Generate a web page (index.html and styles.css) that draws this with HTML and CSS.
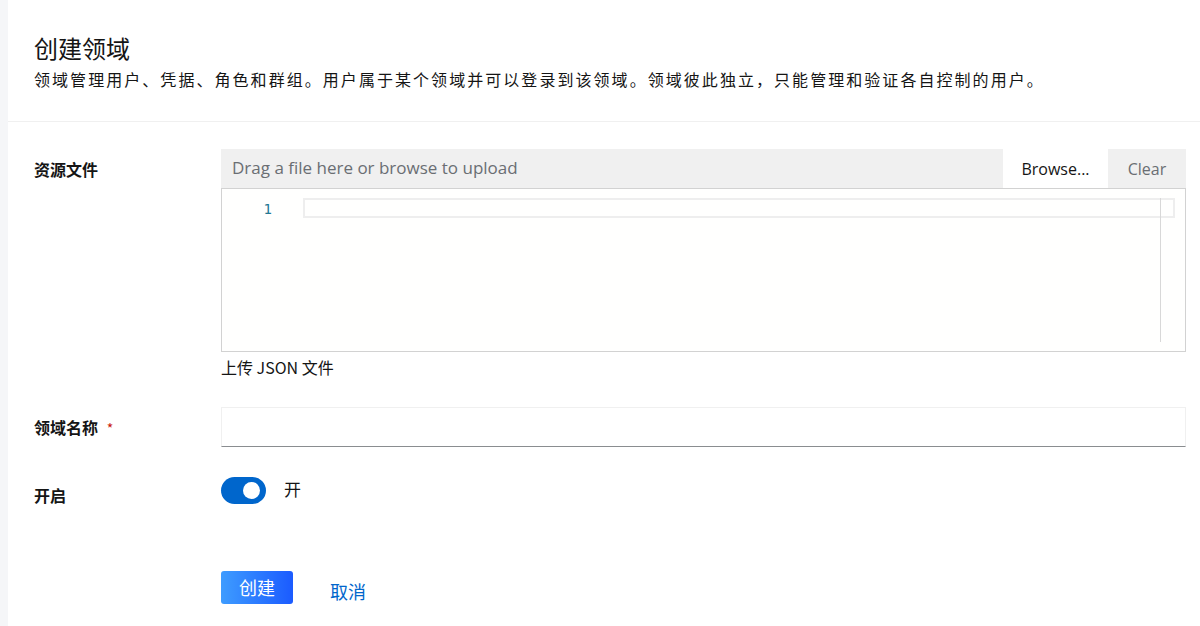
FILE: index.html
```html
<!DOCTYPE html>
<html lang="zh-CN">
<head>
    <meta charset="UTF-8">
    <meta name="viewport" content="width=device-width, initial-scale=1.0">
    <title>创建领域</title>
    <link rel="stylesheet" href="styles.css">
</head>
<body>
    <div class="page">
        <section class="page-header">
            <h1 class="page-title">创建领域</h1>
            <p class="page-desc">领域管理用户、凭据、角色和群组。用户属于某个领域并可以登录到该领域。领域彼此独立，只能管理和验证各自控制的用户。</p>
        </section>

        <form class="realm-form">
            <div class="form-row">
                <label class="form-label">资源文件</label>
                <div class="form-field">
                    <div class="file-bar">
                        <span class="file-hint">Drag a file here or browse to upload</span>
                        <button type="button" class="file-btn browse-btn">Browse...</button>
                        <button type="button" class="file-btn clear-btn">Clear</button>
                    </div>
                    <div class="editor">
                        <div class="editor-gutter">1</div>
                        <div class="editor-lines">
                            <div class="current-line"></div>
                        </div>
                        <div class="editor-ruler"></div>
                    </div>
                    <div class="helper-text">上传 JSON 文件</div>
                </div>
            </div>

            <div class="form-row name-row">
                <label class="form-label">领域名称 <span class="required">*</span></label>
                <div class="form-field">
                    <input type="text" class="text-input">
                </div>
            </div>

            <div class="form-row switch-row">
                <label class="form-label">开启</label>
                <div class="form-field switch-field">
                    <span class="switch"><span class="switch-knob"></span></span>
                    <span class="switch-text">开</span>
                </div>
            </div>

            <div class="form-actions">
                <button type="button" class="btn-primary">创建</button>
                <a href="#" class="btn-link">取消</a>
            </div>
        </form>
    </div>
</body>
</html>
```

FILE: styles.css
```css
* {
    box-sizing: border-box;
}
body {
    margin: 0;
    background-color: #f5f6f8;
    font-family: "Noto Sans CJK SC", "Noto Sans", sans-serif;
    color: #151515;
    height: 626px;
    overflow: hidden;
}
.page {
    margin-left: 8px;
    background-color: #ffffff;
    height: 100%;
}
.page-header {
    padding: 30px 26px 29px;
    border-bottom: 1px solid #f0f0f0;
}
.page-title {
    margin: 0;
    font-size: 24px;
    font-weight: 400;
    line-height: 36px;
}
.page-desc {
    margin: 0;
    font-size: 16px;
    letter-spacing: 2.05px;
    line-height: 26px;
}
.realm-form {
    padding: 27px 14px 0 26px;
}
.form-row {
    display: flex;
}
.form-label {
    width: 187px;
    flex-shrink: 0;
    font-size: 16px;
    font-weight: 700;
    padding-top: 8px;
}
.required {
    color: #c9190b;
    font-weight: 400;
    font-size: 14px;
    margin-left: 5px;
}
.form-field {
    flex: 1;
}
.file-bar {
    display: flex;
    height: 39px;
    background-color: #f0f0f0;
    align-items: stretch;
}
.file-hint {
    flex: 1;
    font-family: "Open Sans", sans-serif;
    font-size: 17px;
    color: #6a6e73;
    padding: 7px 11px;
}
.file-btn {
    border: none;
    font-family: "Open Sans", sans-serif;
    font-size: 16px;
    padding: 0 17px;
    cursor: pointer;
}
.browse-btn {
    background-color: #ffffff;
    color: #151515;
    width: 105px;
}
.clear-btn {
    background-color: #f0f0f0;
    color: #6a6e73;
    width: 78px;
}
.editor {
    position: relative;
    display: flex;
    height: 164px;
    border: 1px solid #d2d2d2;
    background-color: #fffffe;
}
.editor-gutter {
    width: 81px;
    padding: 10px 31px 0 0;
    text-align: right;
    font-family: "DejaVu Sans Mono", monospace;
    font-size: 14px;
    line-height: 20px;
    color: #237893;
}
.editor-lines {
    flex: 1;
    padding: 9px 10px 0 0;
}
.current-line {
    height: 20px;
    border: 2px solid #eeeeee;
}
.editor-ruler {
    position: absolute;
    right: 24px;
    top: 9px;
    bottom: 9px;
    width: 1px;
    background-color: #d8d8d8;
}
.helper-text {
    font-size: 16px;
    margin-top: 3px;
    color: #151515;
}
.name-row {
    margin-top: 28px;
}
.text-input {
    width: 100%;
    height: 40px;
    border: 1px solid #f0f0f0;
    border-bottom: 1px solid #8a8d90;
    font-size: 16px;
    padding: 0 8px;
    outline: none;
}
.switch-row {
    margin-top: 30px;
}
.switch-row .form-label {
    padding-top: 6px;
}
.switch-field {
    display: flex;
    align-items: center;
    height: 27px;
}
.switch {
    display: inline-flex;
    align-items: center;
    justify-content: flex-end;
    width: 45px;
    height: 27px;
    border-radius: 14px;
    background-color: #0066cc;
    padding-right: 6px;
}
.switch-knob {
    width: 17px;
    height: 17px;
    border-radius: 50%;
    background-color: #ffffff;
}
.switch-text {
    margin-left: 18px;
    font-size: 17px;
    margin-top: -4px;
}
.form-actions {
    display: flex;
    align-items: center;
    margin-top: 63px;
    margin-left: 187px;
}
.btn-primary {
    width: 72px;
    height: 33px;
    border: none;
    border-radius: 3px;
    background: linear-gradient(to right, #3e9cff, #1b5bff);
    color: #ffffff;
    font-family: "Noto Sans CJK SC", sans-serif;
    font-size: 18px;
    cursor: pointer;
}
.btn-link {
    margin-left: 37px;
    margin-top: 8px;
    font-size: 18px;
    color: #0066cc;
    text-decoration: none;
}
```
